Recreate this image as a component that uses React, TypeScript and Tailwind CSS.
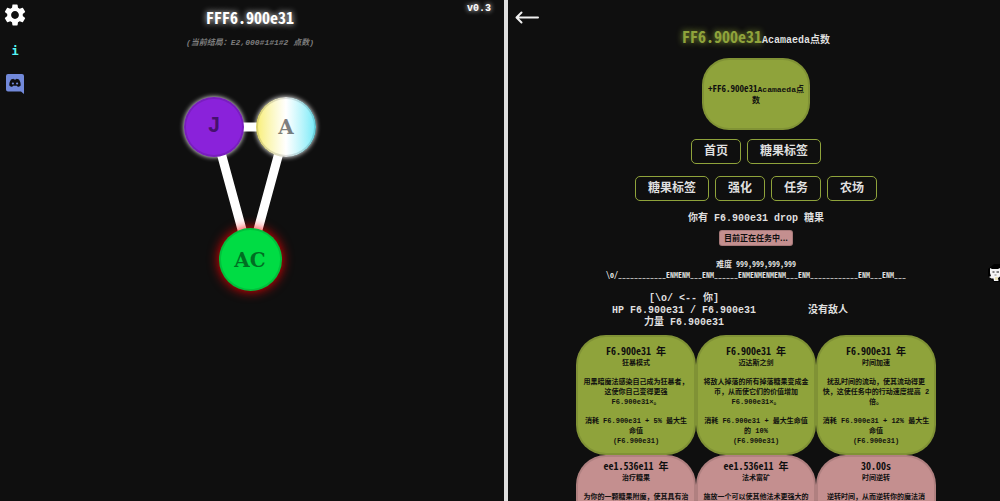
import type { ReactNode } from "react";
import { MdSettings } from "react-icons/md";

const mono = "font-['Noto_Sans_Mono_CJK_SC','DejaVu_Sans_Mono',monospace]";

type Spell = { time: string; year?: boolean; name: string; lines: string[]; cost: string[] };

const active: Spell[] = [
  {
    time: "F6.900e31", year: true, name: "狂暴模式",
    lines: ["用黑暗魔法感染自己成为狂暴者，", "这使你自己变得更强", "F6.900e31×。"],
    cost: ["消耗 F6.900e31 + 5% 最大生", "命值", "(F6.900e31)"],
  },
  {
    time: "F6.900e31", year: true, name: "迈达斯之剑",
    lines: ["将敌人掉落的所有掉落糖果变成金", "币，从而使它们的价值增加", "F6.900e31×。"],
    cost: ["消耗 F6.900e31 + 最大生命值", "的 10%", "(F6.900e31)"],
  },
  {
    time: "F6.900e31", year: true, name: "时间加速",
    lines: ["扰乱时间的流动，使其流动得更", "快，这使任务中的行动速度提高 2", "倍。"],
    cost: ["消耗 F6.900e31 + 12% 最大生", "命值", "(F6.900e31)"],
  },
];

const locked: Spell[] = [
  { time: "ee1.536e11", year: true, name: "治疗糖果", lines: ["为你的一颗糖果附魔，使其具有治"], cost: [] },
  { time: "ee1.536e11", year: true, name: "法术富矿", lines: ["施放一个可以使其他法术更强大的"], cost: [] },
  { time: "30.00s", name: "时间逆转", lines: ["逆转时间，从而逆转你的魔法消"], cost: [] },
];

function SpellCard({ spell, tone }: { spell: Spell; tone: string }) {
  return (
    <button
      type="button"
      className={`flex h-[120px] w-[120px] flex-col items-center rounded-[30px] border-2 border-black/10 bg-origin-border text-[7px] leading-[10px] font-bold whitespace-nowrap text-[#0f0f0f] ${tone}`}
    >
      <span className={`text-[10px] leading-3 font-bold ${mono}`}>
        {spell.time}
        {spell.year && " 年"}
      </span>
      <span className="leading-3">{spell.name}</span>
      <span className="mt-2 flex flex-col">
        {spell.lines.map((l) => <span key={l}>{l}</span>)}
      </span>
      <span className="mt-[9px] flex flex-col">
        {spell.cost.map((l) => <span key={l}>{l}</span>)}
      </span>
    </button>
  );
}

function TabButton({ children }: { children: ReactNode }) {
  return (
    <button type="button" className="h-[25px] rounded-[5px] border border-[#8fa33b] px-3 text-[12px] leading-4 font-bold text-[#dfdfdf]">
      {children}
    </button>
  );
}

function TreeNode({ label, look }: { label: string; look: string }) {
  return (
    <button
      type="button"
      className={`relative flex items-center justify-center rounded-full border-2 border-black/12 bg-origin-border font-bold text-black/50 ${look}`}
    >
      {label}
    </button>
  );
}

export default function App() {
  return (
    <div className="flex h-screen overflow-hidden bg-[#0f0f0f] font-['Liberation_Mono','Noto_Sans_CJK_SC',monospace] text-[10px] leading-3 font-bold text-[#dfdfdf]">
      <main className="flex w-1/2 shrink-0 items-start">
        <nav className="flex w-[30px] flex-col items-center pt-[2px]">
          <button type="button" aria-label="设置" className="text-white">
            <MdSettings size={26} />
          </button>
          <button type="button" aria-label="信息" className="mt-[15px] h-4 font-['DejaVu_Sans_Mono',monospace] text-[12px] leading-4 text-[#55f5f5]">
            i
          </button>
          <a href="#discord" aria-label="Discord" className="mt-[15px]">
            <svg width="18" height="20" viewBox="0 0 18 20">
              <path fill="#7289da" d="M2 0h14a2 2 0 0 1 2 2v18l-3-2.500H2a2 2 0 0 1-2-2V2a2 2 0 0 1 2-2Z" />
              <path fill="#0f0f0f" d="M5 5.400 7.400 4.800 8 5.500h2l.6-.7 2.400.6c1.200 1.800 1.800 3.800 1.700 6-.8.9-1.800 1.400-3 1.400l-.8-1H7.100l-.8 1c-1.200 0-2.200-.5-3-1.400-.1-2.200.5-4.200 1.700-6Z" />
              <circle cx="6.900" cy="9.500" r="1.100" fill="#7289da" />
              <circle cx="11.100" cy="9.500" r="1.100" fill="#7289da" />
            </svg>
          </a>
        </nav>
        <section className="flex flex-1 flex-col items-center pt-[7px]">
          <h1 className={`text-[16px] leading-5 text-white [text-shadow:0_0_6px_#fff] ${mono}`}>FFF6.900e31</h1>
          <p className="mt-[10px] text-[8px] text-[#7d7d7d] italic">(当前结局：E2,000#1#1#2 点数)</p>
          <div className="relative mt-12 flex w-[132px] flex-wrap justify-center gap-x-3 gap-y-[71px]">
            <svg className="absolute top-0 left-0" width="132" height="194" viewBox="0 0 132 194" stroke="#fff" strokeWidth="9">
              <path d="M30 30H102M30 30 66 162 102 30" fill="none" />
            </svg>
            <TreeNode label="J" look="size-[60px] bg-[#8a22da] font-['Liberation_Mono',monospace] text-[22px] shadow-[0_0_5px_#fff]" />
            <TreeNode label="A" look="size-[60px] bg-linear-to-r from-[#f9ee72] via-white to-[#6eeaf8] font-['DejaVu_Serif',serif] text-[20px] shadow-[0_0_5px_#fff]" />
            <TreeNode label="AC" look="size-[63px] bg-[#00dc44] font-['DejaVu_Serif',serif] text-[20px] shadow-[0_0_12px_#f00]" />
          </div>
        </section>
        <p className="w-[30px] pt-[3px] text-[10px] leading-3 text-white [text-shadow:0_0_5px_#fff]">
          <span className="-ml-[3px]">v0.3</span>
        </p>
      </main>

      <div className="ml-1 w-1 shrink-0 bg-[#dfdfdf]" />

      <section className="flex flex-1 items-start">
        <button type="button" aria-label="返回" className="mt-[11px] ml-[7px] w-6 shrink-0">
          <svg width="24" height="13" viewBox="0 0 24 13" fill="none" stroke="#f0f0f0" strokeWidth="2" strokeLinecap="round" strokeLinejoin="round">
            <path d="M2 6.500H23M6.500 1.500 1.500 6.500 6.500 11.500" />
          </svg>
        </button>
        <div className="flex flex-1 flex-col items-center pt-[26px]">
          <div className="flex items-baseline">
            <span className={`text-[16px] leading-5 text-[#8fa33b] [text-shadow:0_0_6px_#8fa33b] ${mono}`}>FF6.900e31</span>
            <h2>Acamaeda点数</h2>
          </div>
          <button type="button" className="mt-[11px] h-[72px] w-[108px] rounded-[27px] border-2 border-black/10 bg-[#8fa33b] bg-origin-border px-[3px] text-[8px] leading-[11px] text-[#0f0f0f]">
            <span className={`text-[9px] ${mono}`}>+FF6.900e31</span>Acamaeda点数
          </button>
          <div className="mt-[9px] flex gap-[6px]">
            <TabButton>首页</TabButton>
            <TabButton>糖果标签</TabButton>
          </div>
          <div className="mt-3 flex gap-[6px]">
            <TabButton>糖果标签</TabButton>
            <TabButton>强化</TabButton>
            <TabButton>任务</TabButton>
            <TabButton>农场</TabButton>
          </div>
          <p className="mt-3">你有 F6.900e31 drop 糖果</p>
          <button type="button" className="mt-[5px] h-4 rounded-[3px] border border-black/15 bg-[#c48f8f] px-1 font-['Noto_Sans_CJK_SC',sans-serif] text-[8px] leading-3 font-bold text-[#0f0f0f]">
            目前正在任务中...
          </button>
          <div className={`mt-3 flex flex-col items-center text-[8px] leading-[11px] whitespace-nowrap ${mono}`}>
            <p>难度 999,999,999,999</p>
            <p>\o/____________ENMENM___ENM______ENMENMENMENM___ENM____________ENM___ENM___</p>
          </div>
          <div className="mt-[13px] grid grid-cols-[144px_144px] items-center justify-items-center text-center whitespace-nowrap">
            <p>[\o/ &lt;-- 你]<br />HP F6.900e31 / F6.900e31<br />力量 F6.900e31</p>
            <p>没有敌人</p>
          </div>
          <div className="mt-[6px] grid grid-cols-3">
            {active.map((s) => <SpellCard key={s.name} spell={s} tone="bg-[#8fa33b] pt-2" />)}
            {locked.map((s) => <SpellCard key={s.name} spell={s} tone="bg-[#c48f8f] pt-[3px]" />)}
          </div>
        </div>
        <div className="w-[27px] shrink-0" />
      </section>

      <a href="#cat" aria-label="猫" className="absolute top-[264px] right-0">
        <svg width="12" height="20" viewBox="0 0 12 20">
          <path fill="#000" d="M12 0H6L0 5v7l6 6h6Z" />
          <path fill="#f5f5f5" d="M2 4l2 1h6l2-1v8.500l-2 1.500.5 3H6l-.5-2.500L3.500 14.500 1 13l2-1L2 9Z" />
          <path stroke="#111" d="M4.500 8h2M8.500 8h2.500" />
          <path stroke="#555" strokeWidth=".7" d="M6.500 11h2" />
          <path fill="#e9e2b8" d="M7 13h3v3H7z" />
        </svg>
      </a>
    </div>
  );
}
